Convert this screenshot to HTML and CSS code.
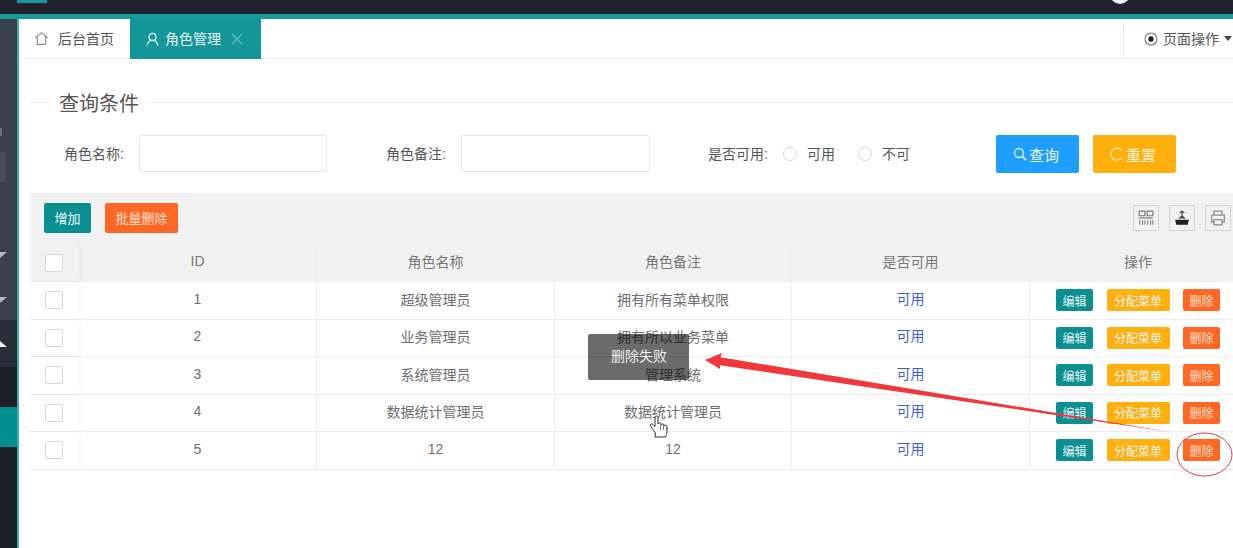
FILE: index.html
```html
<!DOCTYPE html>
<html lang="zh-CN">
<head>
<meta charset="utf-8">
<title>角色管理</title>
<link rel="stylesheet" href="styles.css">
</head>
<body>
<div class="app">
  <header class="topbar">
    <span class="logo"></span>
    <span class="avatar"></span>
  </header>
  <div class="shell">
    <aside class="sidebar">
      <div class="side-group">
        <span class="side-mark"></span>
        <span class="side-block"></span>
        <span class="caret caret-first"></span>
        <span class="caret caret-next"></span>
      </div>
      <div class="side-open"><span class="caret-up"></span></div>
      <div class="side-item"></div>
      <div class="side-item side-current"></div>
      <div class="side-item side-rest"></div>
    </aside>
    <main class="content">
      <nav class="tabs">
        <a class="tab">
          <svg class="tab-icon" viewBox="0 0 16 16"><path d="M1.500 7.500 8 1.800l6.500 5.700M3.500 6.500v7.700h9V6.500" fill="none" stroke="#8a8a8a" stroke-width="1.200"/></svg>
          <span class="tab-text">后台首页</span>
        </a>
        <a class="tab tab-active">
          <svg class="tab-icon" viewBox="0 0 16 16"><circle cx="8" cy="5.200" r="3.700" fill="none" stroke="#dff3f3" stroke-width="1.300"/><path d="M2.200 14.500c.6-3.600 2.700-5.600 5.800-5.600s5.200 2 5.800 5.600" fill="none" stroke="#dff3f3" stroke-width="1.300"/></svg>
          <span class="tab-text">角色管理</span>
          <svg class="tab-close" viewBox="0 0 12 12"><path d="M1 1l10 10M11 1 1 11" stroke="#69bcbc" stroke-width="1.200"/></svg>
        </a>
        <div class="page-ops">
          <svg class="ops-icon" viewBox="0 0 14 14"><circle cx="7" cy="7" r="6" fill="none" stroke="#777" stroke-width="1.100"/><circle cx="7" cy="7" r="2.700" fill="#222"/></svg>
          <span class="tab-text">页面操作</span>
          <span class="ops-caret"></span>
        </div>
      </nav>

      <section class="panel">
        <div class="legend"><span class="legend-text">查询条件</span></div>
        <form class="filters">
          <label class="f-label f-name">角色名称:</label>
          <input class="f-input f-input-name" type="text">
          <label class="f-label f-note">角色备注:</label>
          <input class="f-input f-input-note" type="text">
          <span class="f-label f-state">是否可用:</span>
          <span class="radio radio-first"></span><span class="radio-text">可用</span>
          <span class="radio radio-second"></span><span class="radio-text">不可</span>
          <button class="btn-lg btn-blue" type="button">
            <svg class="btn-icon" viewBox="0 0 14 14"><circle cx="6" cy="6" r="4.500" fill="none" stroke="#d8edff" stroke-width="1.500"/><path d="M9.300 9.300 13 13" stroke="#d8edff" stroke-width="1.800"/></svg>查询
          </button>
          <button class="btn-lg btn-amber" type="button">
            <svg class="btn-icon" viewBox="0 0 14 14"><path d="M11.500 3.200A6 6 0 1 0 11.800 10.600" fill="none" stroke="#ffe7b0" stroke-width="1.300"/></svg>重置
          </button>
        </form>

        <div class="toolbar">
          <button class="btn-md btn-teal" type="button">增加</button>
          <button class="btn-md btn-orange" type="button">批量删除</button>
          <div class="tools">
            <span class="tool">
              <svg viewBox="0 0 14 14"><path d="M1 1h5v4H1zM8 1h5v4H8z" fill="none" stroke="#777"/><path d="M1 7h12" stroke="#777"/><path d="M1.500 9v4M4 9v4M6 9v4M8.500 9v4M11 9v4M13 9v4" stroke="#888"/></svg>
            </span>
            <span class="tool">
              <svg viewBox="0 0 14 14"><path d="M1 8.500h12L12 13H2z" fill="#222"/><path d="M3.500 7.500 7 4.500l3.500 3z" fill="#444"/><path d="M7 5V.8M5 2.600 7 .8l2 1.800" fill="none" stroke="#444"/></svg>
            </span>
            <span class="tool">
              <svg viewBox="0 0 14 14"><path d="M3.500 4.500V1h7v3.500M3.500 10.500h-2v-6h11v6h-2M3.500 8.500h7V13h-7z" fill="none" stroke="#8c8c8c" stroke-width="1.100"/></svg>
            </span>
          </div>
        </div>

        <div class="grid">
          <div class="row row-head">
            <div class="cell cell-check"><span class="check"></span></div>
            <div class="cell">ID</div>
            <div class="cell">角色名称</div>
            <div class="cell">角色备注</div>
            <div class="cell">是否可用</div>
            <div class="cell">操作</div>
          </div>
          <div class="row">
            <div class="cell cell-check"><span class="check"></span></div>
            <div class="cell">1</div>
            <div class="cell">超级管理员</div>
            <div class="cell">拥有所有菜单权限</div>
            <div class="cell cell-state">可用</div>
            <div class="cell cell-actions"><span class="btn-sm btn-teal">编辑</span><span class="btn-sm btn-amber">分配菜单</span><span class="btn-sm btn-orange">删除</span></div>
          </div>
          <div class="row">
            <div class="cell cell-check"><span class="check"></span></div>
            <div class="cell">2</div>
            <div class="cell">业务管理员</div>
            <div class="cell">拥有所以业务菜单</div>
            <div class="cell cell-state">可用</div>
            <div class="cell cell-actions"><span class="btn-sm btn-teal">编辑</span><span class="btn-sm btn-amber">分配菜单</span><span class="btn-sm btn-orange">删除</span></div>
          </div>
          <div class="row">
            <div class="cell cell-check"><span class="check"></span></div>
            <div class="cell">3</div>
            <div class="cell">系统管理员</div>
            <div class="cell">管理系统</div>
            <div class="cell cell-state">可用</div>
            <div class="cell cell-actions"><span class="btn-sm btn-teal">编辑</span><span class="btn-sm btn-amber">分配菜单</span><span class="btn-sm btn-orange">删除</span></div>
          </div>
          <div class="row">
            <div class="cell cell-check"><span class="check"></span></div>
            <div class="cell">4</div>
            <div class="cell">数据统计管理员</div>
            <div class="cell">数据统计管理员</div>
            <div class="cell cell-state">可用</div>
            <div class="cell cell-actions"><span class="btn-sm btn-teal">编辑</span><span class="btn-sm btn-amber">分配菜单</span><span class="btn-sm btn-orange">删除</span></div>
          </div>
          <div class="row">
            <div class="cell cell-check"><span class="check"></span></div>
            <div class="cell">5</div>
            <div class="cell">12</div>
            <div class="cell">12</div>
            <div class="cell cell-state">可用</div>
            <div class="cell cell-actions"><span class="btn-sm btn-teal">编辑</span><span class="btn-sm btn-amber">分配菜单</span><span class="btn-sm btn-orange">删除</span></div>
          </div>
        </div>
      </section>
    </main>
  </div>

  <div class="toast">删除失败</div>

  <!-- annotation layer: arrow, circled button and pointer -->
  <svg class="marks" viewBox="0 0 1233 548">
    <path d="M705 360 722 353 720.500 357.200 1170 432 720 365.300 720 369z" fill="#f0383c"/>
    <ellipse cx="1204.500" cy="454.500" rx="27.500" ry="21.500" fill="none" stroke="#cf3f4c" stroke-width="1"/>
    <path d="M655.500 433c-2-3-5-6-5-8 0-1.500 2-1.500 3 0l1.500 1.500V417.500c0-2 3-2 3 0v6.500c0-1.500 3-1.500 3 0v1c0-1.500 3-1.500 3 0v1c0-1.500 3-1 3 .5v5.500c0 2-.7 3-1.500 5h-10.500z" fill="#fff" stroke="#333" stroke-width="1"/>
    <path d="M660.500 425v5M663.500 426v4M666.500 427v3" stroke="#555" stroke-width=".8"/>
  </svg>
</div>
</body>
</html>
```

FILE: styles.css
```css
* {
  box-sizing: border-box;
}

html,
body {
  margin: 0;
  height: 100%;
  overflow: hidden;
}

body {
  font-family: "Liberation Sans", "Noto Sans CJK SC", sans-serif;
  font-size: 14px;
  color: #666;
  background: #fff;
}

.app {
  position: relative;
  display: flex;
  flex-direction: column;
  height: 548px;
  overflow: hidden;
}

/* top bar */
.topbar {
  flex: none;
  display: flex;
  height: 19px;
  background: #20222d;
  border-bottom: 5px solid #179a9c;
  overflow: hidden;
}

.logo {
  width: 30px;
  height: 3px;
  margin-left: 17px;
  background: #1a9a9c;
}

.avatar {
  width: 20px;
  height: 20px;
  margin: -16px 103px 0 auto;
  border-radius: 50%;
  background: #f4f4f4;
}

.shell {
  flex: 1;
  display: flex;
  min-height: 0;
}

/* side menu */
.sidebar {
  flex: none;
  display: flex;
  flex-direction: column;
  width: 19px;
  border-right: 2px solid #38b0b2;
  background: #1f1f28;
}

.side-group {
  display: flex;
  flex-direction: column;
  height: 301px;
  background: #393f4b;
}

.side-mark {
  width: 2px;
  height: 8px;
  margin-top: 109px;
  background: #6a7079;
}

.side-block {
  width: 6px;
  height: 30px;
  margin-top: 16px;
  background: #474d59;
}

/* section carets, cut off by the collapsed menu's edge */
.caret {
  width: 0;
  height: 0;
  border-top: 6px solid #b5b8bd;
  border-right: 7px solid transparent;
}

.caret-first {
  margin-top: 70px;
}

.caret-next {
  margin-top: 39px;
}

.side-open {
  height: 47px;
  padding-top: 21px;
  background: #2b2e38;
}

.caret-up {
  display: block;
  width: 0;
  height: 0;
  border-bottom: 6px solid #f0f0f0;
  border-right: 7px solid transparent;
}

.side-item {
  height: 40px;
  background: #1f1f28;
}

.side-current {
  background: #008e8e;
}

.side-rest {
  flex: 1;
}

/* main column */
.content {
  flex: 1;
  min-width: 0;
  overflow: hidden;
  background: #fff;
}

.tabs {
  display: flex;
  height: 40px;
  border-bottom: 1px solid #eeeeee;
}

.tab {
  display: flex;
  align-items: center;
  width: 111px;
  padding-left: 15px;
  gap: 9px;
  color: #555;
}

.tab-icon {
  width: 15px;
  height: 15px;
}

.tab-text {
  margin-bottom: 2px;
}

.tab-active {
  width: 131px;
  height: 40px;
  padding-left: 15px;
  gap: 5px;
  background: #159699;
  color: #e9f7f7;
}

.tab-close {
  width: 12px;
  height: 12px;
  margin-left: 5px;
}

.page-ops {
  display: flex;
  align-items: center;
  margin-left: auto;
  width: 110px;
  padding-left: 20px;
  gap: 5px;
  border-left: 1px solid #eeeeee;
  color: #555;
  white-space: nowrap;
}

.ops-icon {
  flex: none;
  width: 14px;
  height: 14px;
}

.ops-caret {
  flex: none;
  border-top: 5px solid #444;
  border-left: 4.500px solid transparent;
  border-right: 4.500px solid transparent;
}

.panel {
  padding-left: 11px;
}

/* fieldset-style heading with a rule either side */
.legend {
  display: flex;
  align-items: center;
  height: 30px;
  margin-top: 28px;
}

.legend::before {
  content: "";
  width: 20px;
  height: 1px;
  margin-right: 9px;
  background: #eeeeee;
}

.legend::after {
  content: "";
  flex: 1;
  height: 1px;
  margin-left: 10px;
  background: #eeeeee;
}

.legend-text {
  font-size: 20px;
  color: #555;
}

/* search form */
.filters {
  display: flex;
  align-items: center;
  height: 38px;
  margin-top: 18px;
  white-space: nowrap;
}

.f-label {
  margin-bottom: 3px;
  color: #555;
}

.f-name {
  margin-left: 34px;
  width: 75px;
}

.f-note {
  margin-left: 59px;
  width: 75px;
}

.f-state {
  margin-left: 58px;
  width: 75px;
}

.f-input {
  align-self: flex-start;
  height: 37px;
  border: 1px solid #e8e8e8;
  border-radius: 2px;
  background: #fff;
}

.f-input-name {
  width: 188px;
}

.f-input-note {
  width: 189px;
}

.radio {
  flex: none;
  width: 14px;
  height: 14px;
  border: 1.500px solid #d6d6d6;
  border-radius: 50%;
}

.radio-second {
  margin-left: 23px;
}

.radio-text {
  margin-left: 10px;
  margin-bottom: 3px;
  color: #555;
}

.btn-lg {
  flex: none;
  display: flex;
  align-items: center;
  justify-content: center;
  width: 83px;
  height: 38px;
  padding: 0 3px 0 0;
  border: 0;
  border-radius: 2px;
  font: inherit;
  font-size: 15px;
  color: #eef7ff;
}

.btn-blue {
  margin-left: 86px;
  background: #1e9fff;
}

.btn-amber {
  background: #ffb00f;
  color: #fff3d6;
}

.btn-lg.btn-amber {
  margin-left: 14px;
}

.btn-icon {
  width: 14px;
  height: 14px;
  margin-right: 2px;
}

/* table toolbar */
.toolbar {
  display: flex;
  align-items: center;
  height: 51px;
  margin-top: 20px;
  padding: 0 2px 2px 14px;
  background: #f2f2f2;
}

.btn-md {
  flex: none;
  height: 30px;
  padding: 0;
  border: 0;
  border-radius: 2px;
  font: inherit;
  font-size: 13px;
  color: #f2fbfb;
}

.btn-md.btn-teal {
  width: 47px;
}

.btn-md.btn-orange {
  width: 73px;
  margin-left: 14px;
  color: #ffe3d2;
}

.tools {
  display: flex;
  gap: 10px;
  margin-left: auto;
}

.tool {
  display: flex;
  align-items: center;
  justify-content: center;
  width: 26px;
  height: 26px;
  border: 1px solid #d4d4d4;
}

.tool svg {
  width: 16px;
  height: 16px;
}

.btn-teal {
  background: #0b8f90;
}

.btn-orange {
  background: #ff6725;
}

/* data grid */
.grid {
  width: 1216px;
}

.row {
  display: grid;
  grid-template-columns: 49px 238px 238px 237px 238px 216px;
  height: 37.500px;
  border-bottom: 1px solid #ececec;
  background: #fff;
}

.row-head {
  height: 38px;
  background: #f2f2f2;
}

.cell {
  display: flex;
  align-items: center;
  justify-content: center;
  padding-bottom: 3px;
  border-right: 1px solid #eeeeee;
  color: #6e6e6e;
}

.cell:last-child {
  border-right: 0;
}

.row-head .cell {
  color: #777;
}

.cell-check {
  justify-content: flex-start;
  padding: 0 0 0 15px;
  border-right: 0;
  box-shadow: 2px 0 3px rgba(0, 0, 0, .04);
}

.check {
  width: 18px;
  height: 18px;
  border: 1px solid #d8d8d8;
  border-radius: 2px;
  background: #fff;
}

.cell-state {
  padding-bottom: 5px;
  color: #3f5fd0;
}

.cell-actions {
  gap: 13.500px;
  padding-bottom: 0;
}

.btn-sm {
  display: flex;
  align-items: center;
  justify-content: center;
  flex: none;
  width: 37px;
  height: 22px;
  border-radius: 2px;
  font-size: 12px;
  color: #eaf6f6;
}

.btn-sm.btn-amber {
  width: 63px;
}

.btn-sm.btn-orange {
  color: #ffe3d2;
}

/* items lying over the page */
.toast {
  position: absolute;
  left: 588px;
  top: 334px;
  width: 101px;
  height: 46px;
  padding: 11px 0 0 23px;
  border-radius: 2px;
  background: rgba(0, 0, 0, .58);
  color: #eeeeee;
}

.marks {
  position: absolute;
  left: 0;
  top: 0;
  width: 1233px;
  height: 548px;
  pointer-events: none;
}
```
